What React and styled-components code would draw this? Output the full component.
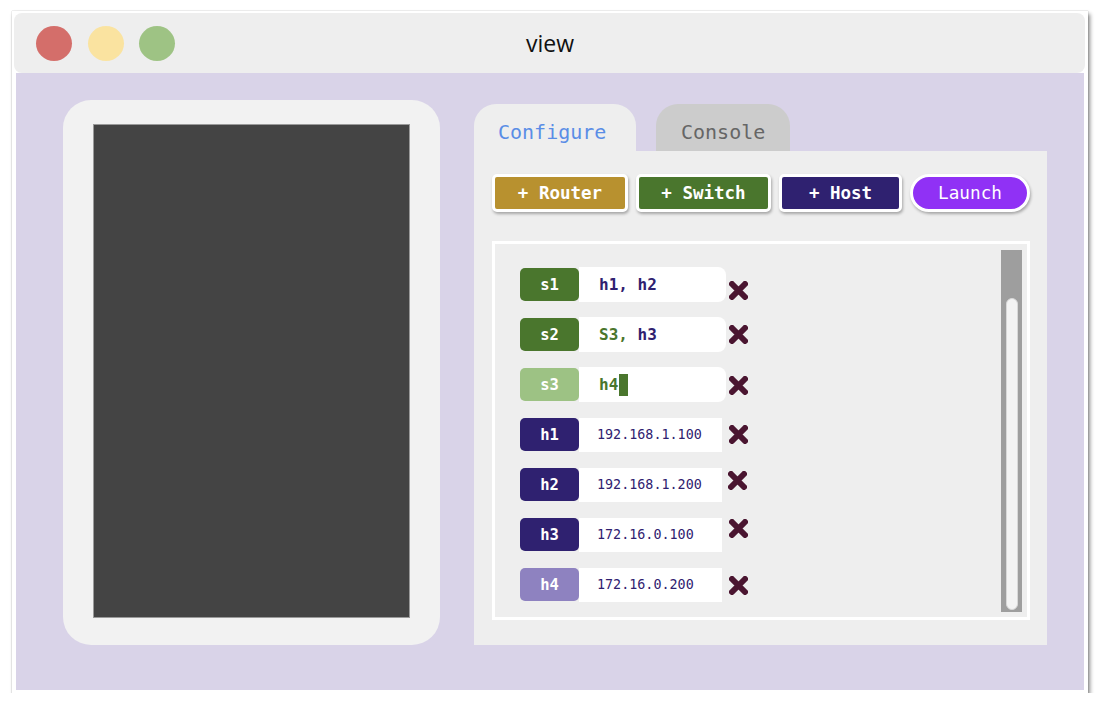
import React from "react";
import styled, { createGlobalStyle } from "styled-components";

const GlobalStyle = createGlobalStyle`
  html, body {
    margin: 0;
    padding: 0;
    background: #ffffff;
  }
  body {
    font-family: "Open Sans", "Liberation Sans", sans-serif;
  }
`;

const MONO = `"DejaVu Sans Mono", "Liberation Mono", monospace`;

const nodes = [
  { id: "s1", kind: "switch", parts: [{ t: "h1, h2", c: "#2f2170" }], xOff: 6 },
  { id: "s2", kind: "switch", parts: [{ t: "S3,", c: "#4a762d" }, { t: " h3", c: "#2f2170" }], xOff: 0 },
  { id: "s3", kind: "switch", faded: true, parts: [{ t: "h4", c: "#4a762d" }], cursor: true, xOff: 1 },
  { id: "h1", kind: "host", ip: "192.168.1.100", xOff: 0 },
  { id: "h2", kind: "host", ip: "192.168.1.200", xOff: -4, xLeft: 6 },
  { id: "h3", kind: "host", ip: "172.16.0.100", xOff: -6 },
  { id: "h4", kind: "host", faded: true, ip: "172.16.0.200", xOff: 1 },
];

const labelColor = (kind, faded) => {
  if (kind === "switch") return faded ? "#9dc284" : "#4a762d";
  return faded ? "#8e82c0" : "#2f2170";
};

const Cross = () => (
  <svg width="19" height="19" viewBox="0 0 19 19">
    <path
      d="M3 3 L16 16 M16 3 L3 16"
      stroke="#4a1530"
      strokeWidth="6"
      strokeLinecap="round"
    />
  </svg>
);

export default function App() {
  return (
    <>
      <GlobalStyle />
      <Page>
        <Window>
          <TitleBar>
            <Lights>
              <Light color="#d46e6a" />
              <Light color="#fae3a0" />
              <Light color="#9ec384" />
            </Lights>
            <Title>view</Title>
            <span />
          </TitleBar>
          <Body>
            <Preview>
              <Screen />
            </Preview>
            <Side>
              <Tabs>
                <Tab active>Configure</Tab>
                <Tab>Console</Tab>
              </Tabs>
              <Panel>
                <Toolbar>
                  <AddButton bg="#b8912f" w={136}>+ Router</AddButton>
                  <AddButton bg="#4a762d" w={135}>+ Switch</AddButton>
                  <AddButton bg="#2f2170" w={123}>+ Host</AddButton>
                  <LaunchButton>Launch</LaunchButton>
                </Toolbar>
                <ListBox>
                  <Rows>
                    {nodes.map((n) => (
                      <Row key={n.id}>
                        <NodeLabel color={labelColor(n.kind, n.faded)}>{n.id}</NodeLabel>
                        {n.kind === "switch" ? (
                          <LinkInput>
                            {n.parts.map((p, i) => (
                              <span key={i} style={{ color: p.c }}>{p.t}</span>
                            ))}
                            {n.cursor && <Caret />}
                          </LinkInput>
                        ) : (
                          <IpInput>{n.ip}</IpInput>
                        )}
                        <Remove off={n.xOff} left={n.xLeft ?? (n.kind === "switch" ? 3 : 7)}>
                          <Cross />
                        </Remove>
                      </Row>
                    ))}
                  </Rows>
                  <ScrollTrack>
                    <ScrollThumb />
                  </ScrollTrack>
                </ListBox>
              </Panel>
            </Side>
          </Body>
        </Window>
      </Page>
    </>
  );
}

const Page = styled.div`
  padding: 11px 0 0 12px;
`;

const Window = styled.div`
  width: 1068px;
  height: 677px;
  padding: 2px 4px 3px 4px;
  background: #ffffff;
  box-shadow: 0 0 1px rgba(0, 0, 0, 0.35), 2px 3px 4px rgba(0, 0, 0, 0.45);
  display: flex;
  flex-direction: column;
`;

const TitleBar = styled.div`
  height: 60px;
  margin: 0 -1px 0 -2px;
  border-radius: 8px;
  background: #eeeeee;
  display: grid;
  grid-template-columns: 1fr auto 1fr;
  align-items: center;
  flex-shrink: 0;
`;

const Lights = styled.div`
  display: flex;
  gap: 15.5px;
  padding-left: 22px;
`;

const Light = styled.div`
  width: 36px;
  height: 35px;
  border-radius: 50%;
  background: ${(p) => p.color};
`;

const Title = styled.div`
  font-family: "Open Sans", "Liberation Sans", sans-serif;
  font-size: 23px;
  color: #111111;
  padding-left: 1px;
`;

const Body = styled.div`
  flex: 1;
  background: #d9d3e8;
  display: flex;
  align-items: flex-start;
  padding: 27px 0 0 47px;
  gap: 34px;
`;

const Preview = styled.div`
  width: 317px;
  height: 494px;
  padding: 24px 30px 27px 30px;
  background: #f2f2f2;
  border-radius: 28px;
`;

const Screen = styled.div`
  width: 100%;
  height: 100%;
  box-sizing: border-box;
  background: #444444;
  border: 1px solid #9a9a9a;
`;

const Side = styled.div`
  margin-top: 4px;
  width: 573px;
  display: flex;
  flex-direction: column;
`;

const Tabs = styled.div`
  display: flex;
  gap: 20px;
  height: 47px;
`;

const Tab = styled.div`
  width: ${(p) => (p.active ? 162 : 134)}px;
  box-sizing: border-box;
  padding: 14px 0 0 ${(p) => (p.active ? 24 : 25)}px;
  border-radius: 22px 22px 0 0;
  background: ${(p) => (p.active ? "#eeeeee" : "#cccccc")};
  color: ${(p) => (p.active ? "#5a8de6" : "#666666")};
  font-family: ${MONO};
  font-size: 20px;
  line-height: 28px;
`;

const Panel = styled.div`
  height: 494px;
  background: #eeeeee;
  padding: 23px 0 0 18px;
  box-sizing: border-box;
`;

const Toolbar = styled.div`
  display: flex;
  gap: 8px;
  height: 38px;
`;

const AddButton = styled.div`
  width: ${(p) => p.w}px;
  box-sizing: border-box;
  border: 3px solid #ffffff;
  border-radius: 5px;
  background: ${(p) => p.bg};
  box-shadow: 1px 2px 3px rgba(0, 0, 0, 0.3);
  color: #ffffff;
  font-family: ${MONO};
  font-weight: bold;
  font-size: 17.5px;
  display: flex;
  align-items: center;
  justify-content: center;
`;

const LaunchButton = styled(AddButton).attrs({ bg: "#9031f5", w: 120 })`
  border-radius: 19px;
  font-weight: normal;
  font-size: 17.7px;
`;

const ListBox = styled.div`
  margin-top: 29px;
  width: 538px;
  height: 379px;
  box-sizing: border-box;
  border: 3px solid #ffffff;
  background: #eeeeee;
  display: flex;
`;

const Rows = styled.div`
  flex: 1;
  padding: 23px 0 0 25px;
  display: flex;
  flex-direction: column;
  gap: 15px;
`;

const Row = styled.div`
  display: flex;
  align-items: center;
  height: 35px;
`;

const NodeLabel = styled.div`
  width: 59px;
  height: 33px;
  border-radius: 5px;
  background: ${(p) => p.color};
  color: #ffffff;
  font-family: ${MONO};
  font-weight: bold;
  font-size: 15.5px;
  display: flex;
  align-items: center;
  justify-content: center;
`;

const LinkInput = styled.div`
  width: 147px;
  height: 35px;
  box-sizing: border-box;
  padding-left: 20px;
  border-radius: 0 8px 8px 0;
  background: #ffffff;
  font-family: ${MONO};
  font-weight: bold;
  font-size: 16px;
  display: flex;
  align-items: center;
  white-space: pre;
`;

const Caret = styled.span`
  display: inline-block;
  width: 9px;
  height: 22px;
  margin-left: 1px;
  background: #4a762d;
`;

const IpInput = styled.div`
  width: 143px;
  height: 34px;
  box-sizing: border-box;
  padding-left: 18px;
  background: #ffffff;
  color: #2f2170;
  font-family: ${MONO};
  font-size: 13.4px;
  display: flex;
  align-items: center;
`;

const Remove = styled.div`
  margin-left: ${(p) => p.left}px;
  width: 19px;
  height: 19px;
  transform: translateY(${(p) => p.off || 0}px);
  display: flex;
`;

const ScrollTrack = styled.div`
  width: 21px;
  margin: 6px 5px 5px 0;
  padding: 0 4px 2px 5px;
  box-sizing: border-box;
  background: #9e9e9e;
  display: flex;
  flex-direction: column;
  justify-content: flex-end;
`;

const ScrollThumb = styled.div`
  height: 312px;
  border-radius: 6px;
  background: #f3f3f3;
  border: 1px solid #d8d8d8;
  box-sizing: border-box;
`;
